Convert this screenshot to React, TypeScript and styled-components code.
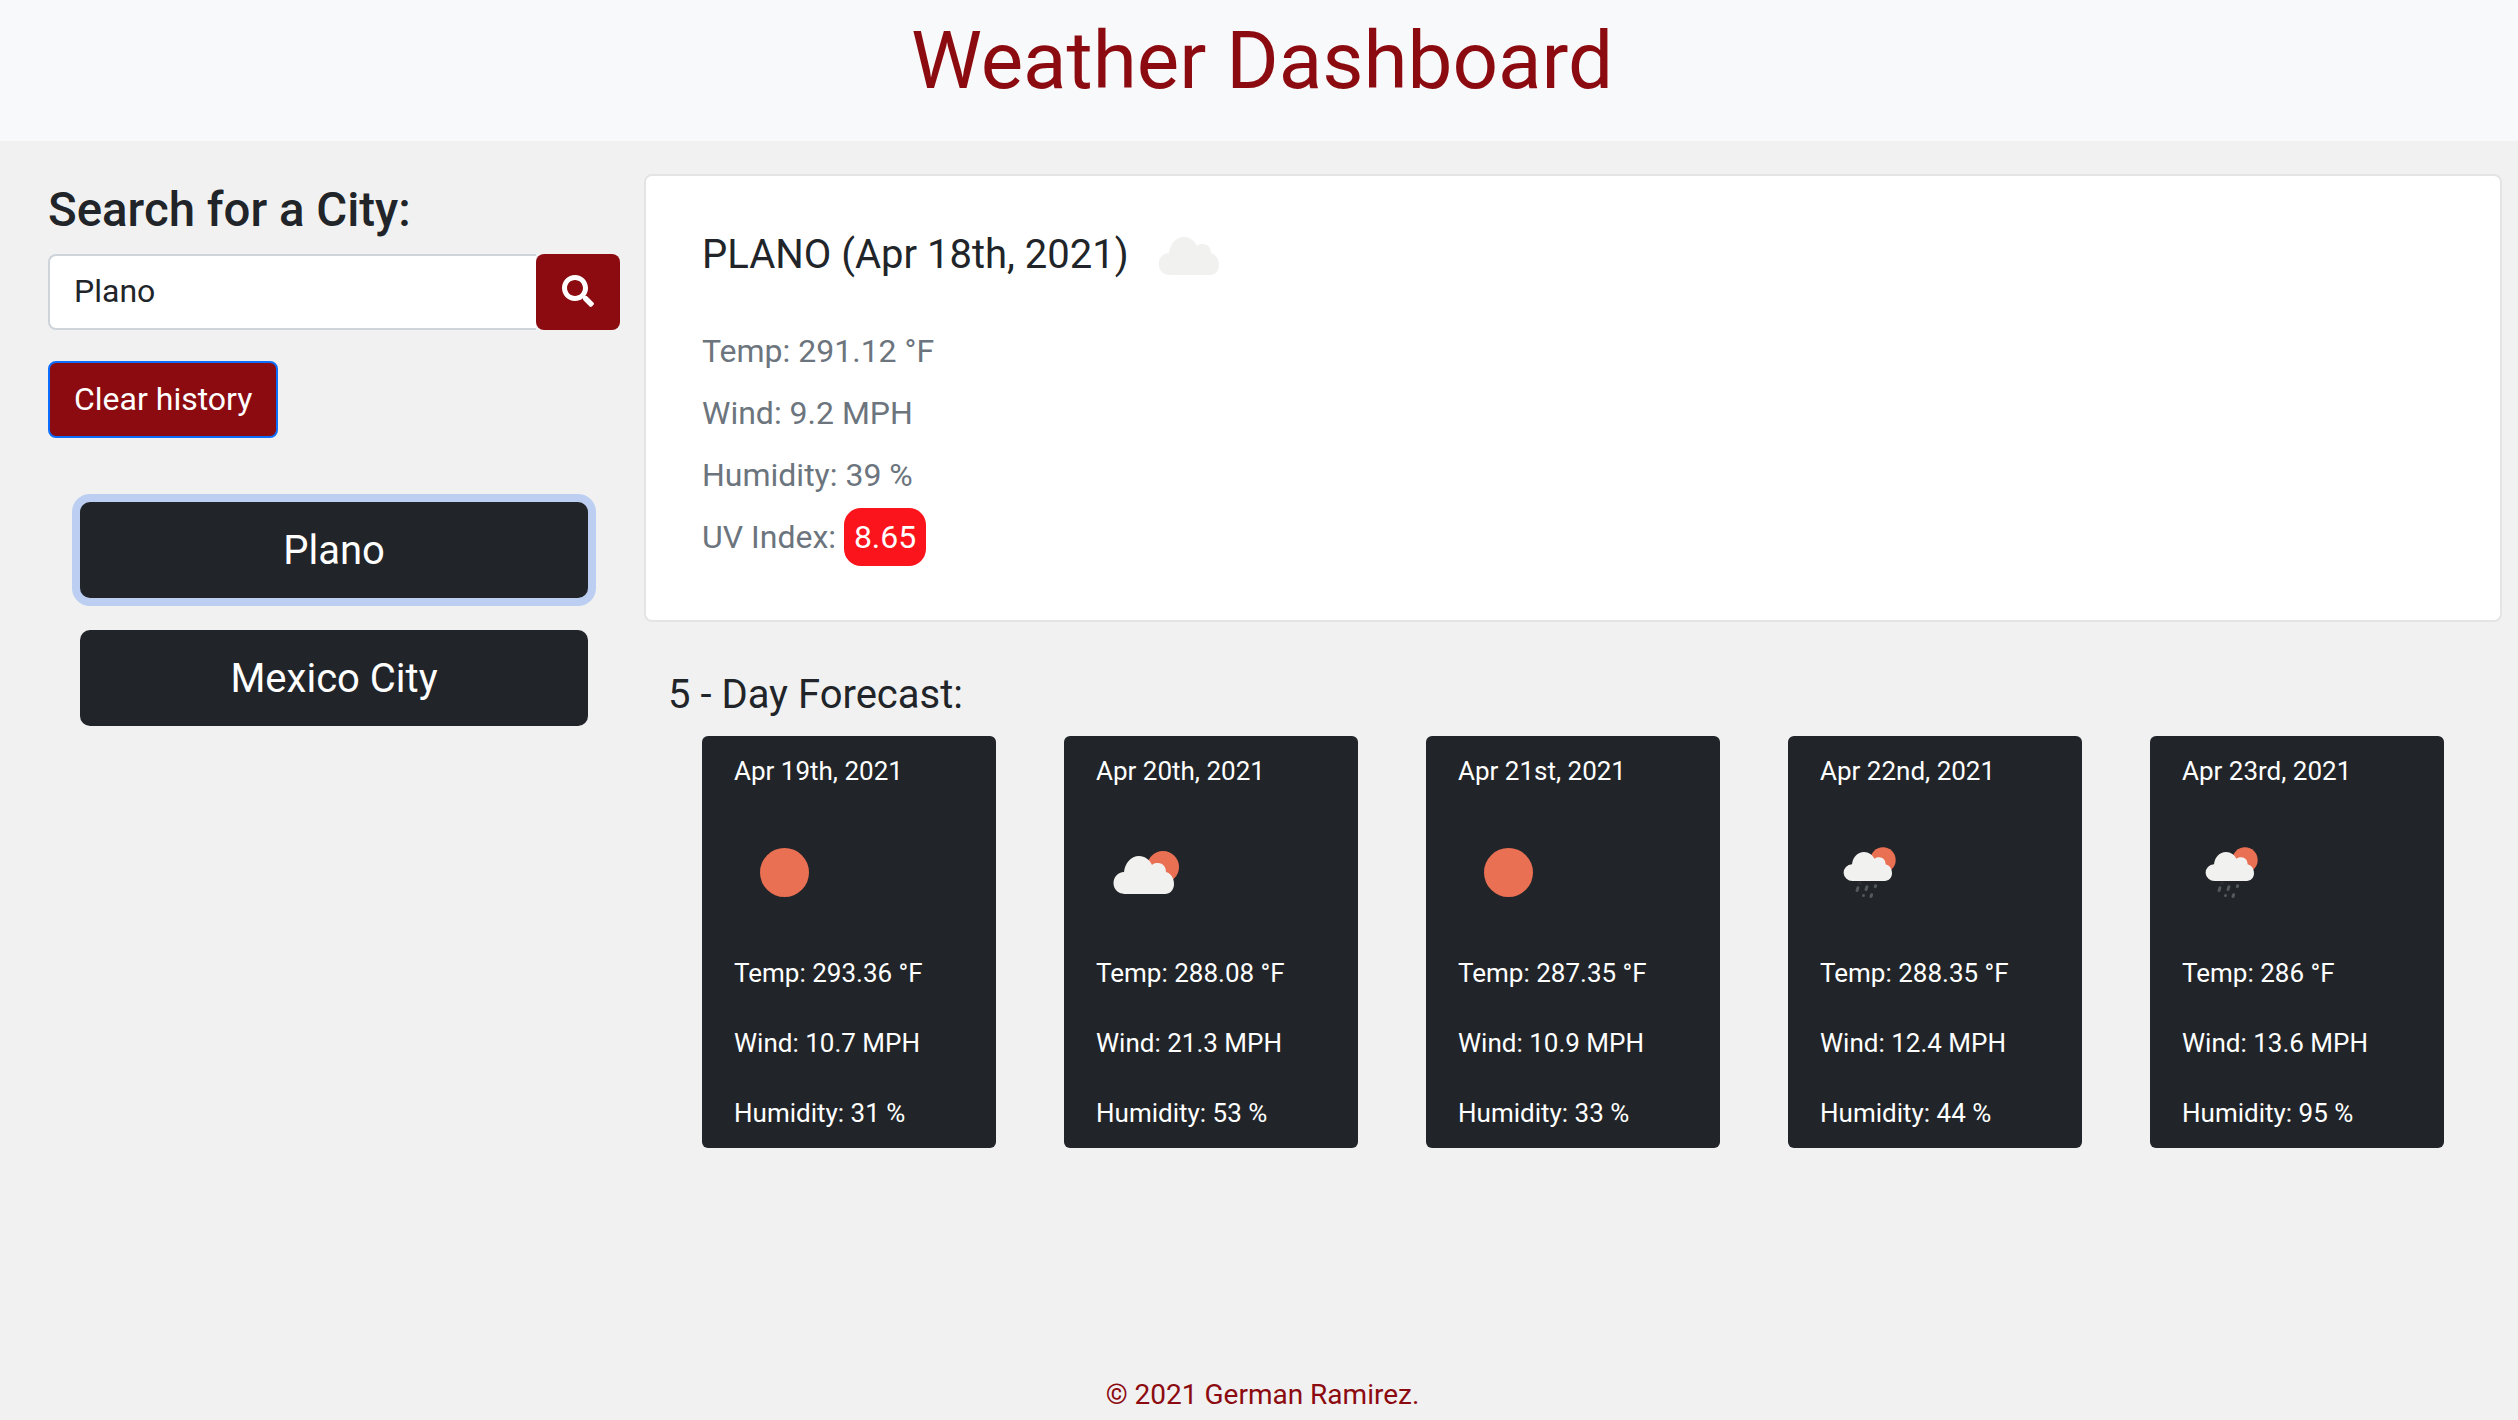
import React from 'react';
import styled, { createGlobalStyle } from 'styled-components';
import { FaSearch } from 'react-icons/fa';

const maroon = '#8c0b10';
const ink = '#212529';
const snow = '#f1f1f0';

const GlobalStyle = createGlobalStyle`
  * { box-sizing: border-box; }
  body {
    margin: 0;
    background: #f1f1f1;
    color: ${ink};
    font-family: Roboto, "Liberation Sans", sans-serif;
  }
`;

const Page = styled.div`
  min-height: 100vh;
  display: flex;
  flex-direction: column;
`;

const Header = styled.header`
  height: 141px;
  background: #f8f9fa;
  display: flex;
  align-items: center;
  justify-content: center;
  padding: 0 0 20px 6px;
`;

const Title = styled.h1`
  margin: 0;
  color: ${maroon};
  font-size: 80px;
  font-weight: 400;
  line-height: 1;
`;

const Main = styled.main`
  flex: 1;
  display: flex;
  align-items: flex-start;
`;

const Sidebar = styled.aside`
  width: 644px;
  flex: none;
  padding: 45px 24px 0 48px;
`;

const SearchTitle = styled.h2`
  margin: 0 0 20px;
  font-size: 47.4px;
  font-weight: 500;
  line-height: 48px;
`;

const SearchRow = styled.form`
  display: flex;
  height: 76px;
`;

const CityInput = styled.input`
  flex: 1;
  min-width: 0;
  border: 2px solid #ced4da;
  border-right: 0;
  border-radius: 8px 0 0 8px;
  padding: 0 24px 2px;
  background: #fff;
  color: ${ink};
  font: 400 32px Roboto, sans-serif;
  outline: none;
`;

const SearchButton = styled.button`
  width: 84px;
  flex: none;
  border: 0;
  border-radius: 8px;
  background: ${maroon};
  color: #fff;
  display: flex;
  align-items: center;
  justify-content: center;
  padding: 0 0 2px;
  font-size: 32px;
`;

const ClearButton = styled.button`
  display: block;
  height: 77px;
  margin-top: 31px;
  padding: 0 24px 2px;
  border: 2px solid #0d6efd;
  border-radius: 8px;
  background: ${maroon};
  color: #fff;
  font: 400 32px Roboto, sans-serif;
`;

const HistoryList = styled.div`
  display: flex;
  flex-direction: column;
  gap: 32px;
  margin: 64px 32px 0;
`;

const HistoryButton = styled.button<{ $focused?: boolean }>`
  height: 96px;
  border: 0;
  border-radius: 10px;
  background: ${ink};
  color: #fff;
  font: 400 40px Roboto, sans-serif;
  box-shadow: ${(p) => (p.$focused ? '0 0 0 8px #bccff2' : 'none')};
`;

const Content = styled.section`
  flex: 1;
  min-width: 0;
  padding: 33px 16px 0 0;
`;

const CurrentPanel = styled.div`
  height: 448px;
  padding: 55px 55px 0 56px;
  background: #fff;
  border: 2px solid #e4e4e4;
  border-radius: 8px;
`;

const CityLine = styled.div`
  display: flex;
  align-items: center;
  gap: 30px;
  height: 48px;
  margin-bottom: 41px;
`;

const CityName = styled.h3`
  margin: 0;
  font-size: 40px;
  font-weight: 400;
  line-height: 48px;
`;

const CloudMark = styled.svg`
  margin-top: 2px;
`;

const CurrentStat = styled.div`
  display: flex;
  align-items: center;
  gap: 8px;
  height: 62px;
  color: #6c757d;
  font-size: 32px;
`;

const UvBadge = styled.span`
  width: 82px;
  height: 58px;
  border-radius: 17px;
  background: #fc141c;
  color: #fff;
  display: flex;
  align-items: center;
  justify-content: center;
`;

const ForecastTitle = styled.h3`
  margin: 49px 0 17px 24px;
  font-size: 40px;
  font-weight: 400;
  line-height: 48px;
`;

const CardRow = styled.div`
  display: flex;
  gap: 68px;
  margin-left: 58px;
`;

const Card = styled.article`
  width: 294px;
  height: 412px;
  padding: 16px 32px;
  background: ${ink};
  border-radius: 6px;
  color: #fff;
  font-size: 26px;
  line-height: 38px;
`;

const IconSlot = styled.div`
  height: 100px;
  margin: 32px 0 32px;
`;

const CardStat = styled.div`
  height: 38px;
  & + & {
    margin-top: 32px;
  }
`;

const Footer = styled.footer`
  height: 45px;
  padding: 1px 0 0 7px;
  color: ${maroon};
  font-size: 28px;
  line-height: 38px;
  text-align: center;
`;

const cloudPath =
  'M11 38a11 11 0 0 1-1-22C11 7 17 0 25 0c6 0 11 4 13 9 2-2 4-2 6-2 5 0 8 4 8 9 4 1 8 5 8 12 0 6-4 10-9 10z';

type IconKind = 'sun' | 'cloud' | 'rain';

function WeatherIcon({ kind }: { kind: IconKind }) {
  if (kind === 'sun') {
    return (
      <svg width="100" height="100" viewBox="0 0 100 100">
        <circle cx="50.5" cy="50.5" r="24.5" fill="#ea7053" />
      </svg>
    );
  }
  if (kind === 'cloud') {
    return (
      <svg width="100" height="100" viewBox="0 0 100 100">
        <circle cx="67" cy="45" r="16" fill="#ea7053" />
        <g transform="translate(18 34)">
          <path d={cloudPath} fill={snow} />
        </g>
      </svg>
    );
  }
  return (
    <svg width="100" height="100" viewBox="0 0 100 100">
      <circle cx="63" cy="38" r="12.7" fill="#ea7053" />
      <g transform="translate(24 30) scale(0.8 0.76)">
        <path d={cloudPath} fill={snow} />
      </g>
      <g fill="#55585c">
        <circle cx="40" cy="61" r="2" fill="#2a2d31" />
        <rect x="36" y="64" width="3" height="6" rx="1.5" transform="rotate(18 37 67)" />
        <rect x="45" y="63" width="3" height="6" rx="1.5" transform="rotate(18 46 66)" />
        <rect x="54" y="62" width="3" height="4" rx="1.5" transform="rotate(18 55 64)" />
        <rect x="42" y="72" width="3" height="3" rx="1.5" />
        <rect x="50" y="71" width="3" height="5" rx="1.5" transform="rotate(18 51 73)" />
      </g>
    </svg>
  );
}

const forecast: { date: string; kind: IconKind; temp: string; wind: string; humidity: string }[] = [
  { date: 'Apr 19th, 2021', kind: 'sun', temp: '293.36', wind: '10.7', humidity: '31' },
  { date: 'Apr 20th, 2021', kind: 'cloud', temp: '288.08', wind: '21.3', humidity: '53' },
  { date: 'Apr 21st, 2021', kind: 'sun', temp: '287.35', wind: '10.9', humidity: '33' },
  { date: 'Apr 22nd, 2021', kind: 'rain', temp: '288.35', wind: '12.4', humidity: '44' },
  { date: 'Apr 23rd, 2021', kind: 'rain', temp: '286', wind: '13.6', humidity: '95' },
];

export default function App() {
  return (
    <Page>
      <GlobalStyle />
      <Header>
        <Title>Weather Dashboard</Title>
      </Header>
      <Main>
        <Sidebar>
          <SearchTitle>Search for a City:</SearchTitle>
          <SearchRow onSubmit={(e) => e.preventDefault()}>
            <CityInput defaultValue="Plano" />
            <SearchButton aria-label="Search">
              <FaSearch />
            </SearchButton>
          </SearchRow>
          <ClearButton>Clear history</ClearButton>
          <HistoryList>
            <HistoryButton $focused>Plano</HistoryButton>
            <HistoryButton>Mexico City</HistoryButton>
          </HistoryList>
        </Sidebar>
        <Content>
          <CurrentPanel>
            <CityLine>
              <CityName>PLANO (Apr 18th, 2021)</CityName>
              <CloudMark width="60" height="38" viewBox="0 0 60 38">
                <path d={cloudPath} fill={snow} />
              </CloudMark>
            </CityLine>
            <CurrentStat>Temp: 291.12 °F</CurrentStat>
            <CurrentStat>Wind: 9.2 MPH</CurrentStat>
            <CurrentStat>Humidity: 39 %</CurrentStat>
            <CurrentStat>
              UV Index: <UvBadge>8.65</UvBadge>
            </CurrentStat>
          </CurrentPanel>
          <ForecastTitle>5 - Day Forecast:</ForecastTitle>
          <CardRow>
            {forecast.map((day) => (
              <Card key={day.date}>
                <div>{day.date}</div>
                <IconSlot>
                  <WeatherIcon kind={day.kind} />
                </IconSlot>
                <CardStat>Temp: {day.temp} °F</CardStat>
                <CardStat>Wind: {day.wind} MPH</CardStat>
                <CardStat>Humidity: {day.humidity} %</CardStat>
              </Card>
            ))}
          </CardRow>
        </Content>
      </Main>
      <Footer>© 2021 German Ramirez.</Footer>
    </Page>
  );
}
